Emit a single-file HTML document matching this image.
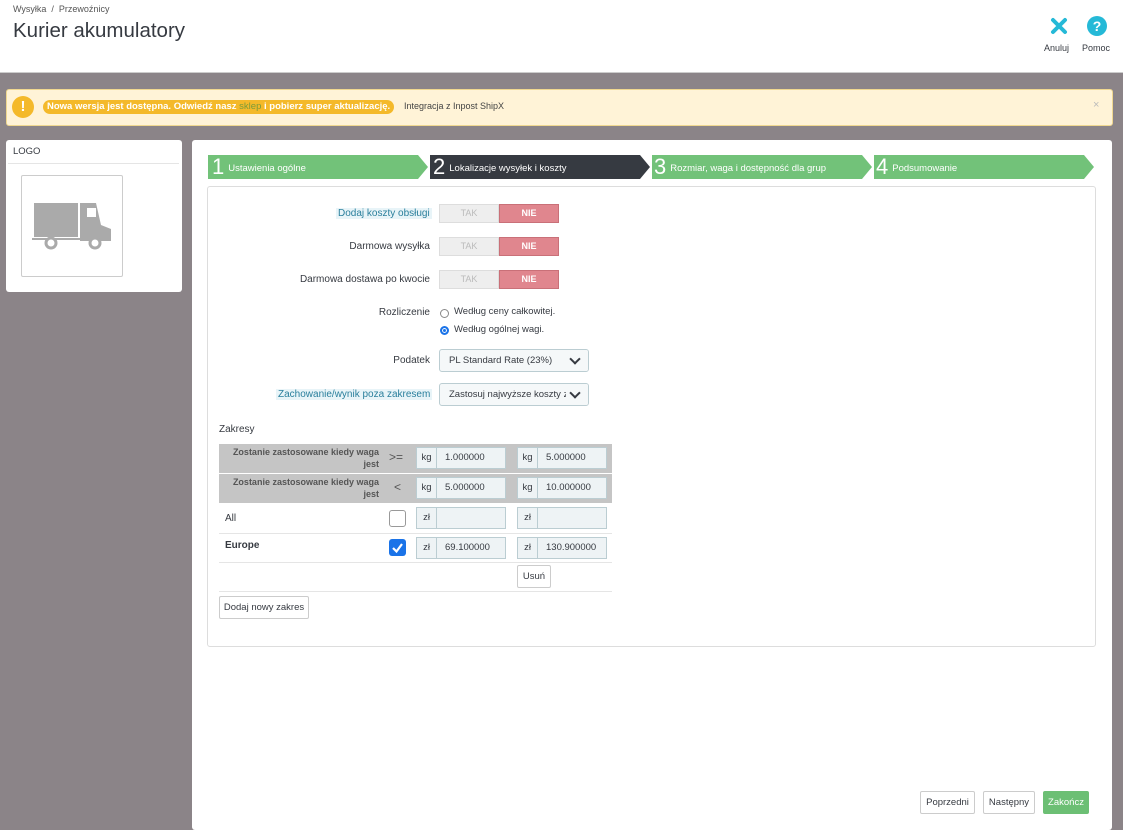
<!DOCTYPE html>
<html><head><meta charset="utf-8"><style>
*{box-sizing:border-box;margin:0;padding:0}
body{width:1123px;height:821px;position:relative;overflow:hidden;background:#8b8488;font-family:"Liberation Sans",sans-serif;font-size:10px;color:#363a41}
.a{position:absolute}
.hdr{left:0;top:0;width:1123px;height:73px;background:#fff;border-bottom:1px solid #ccc}
.lbl{position:absolute;text-align:right;font-size:10px;color:#363a41}
.tog{position:absolute;left:439px;width:120px;height:19px;display:flex;font-size:9px}
.tog span{flex:1;text-align:center;line-height:17px}
.tog .t{background:#eee;color:#bbb;border:1px solid #ddd}
.tog .n{background:#e0868e;color:#fff;font-weight:bold;border:1px solid #c97078}
.sel{position:absolute;left:439px;width:150px;height:23px;border:1px solid #bbcdd2;background:#f5f8f9;border-radius:3px;padding-left:9px;line-height:21px;font-size:9.5px;overflow:hidden;white-space:nowrap}
.sel:after{content:"";position:absolute;right:0;top:0;width:22px;height:21px;background:#f5f8f9}
.sel:before{content:"";position:absolute;right:9px;top:5px;width:6px;height:6px;border-right:2px solid #363a41;border-bottom:2px solid #363a41;transform:rotate(45deg);z-index:2}
.inp{position:absolute;height:22px;border:1px solid #bbcdd2;background:#eef3f5;display:flex;font-size:9.5px}
.inp b{font-weight:normal;width:20px;border-right:1px solid #bbcdd2;text-align:center;line-height:20px}
.inp i{font-style:normal;padding-left:8px;line-height:20px}
.btn{position:absolute;border:1px solid #ccc;background:#fff;border-radius:2px;font-size:9.5px;text-align:center;color:#363a41}
.step{position:absolute;top:155px;height:24px;color:#fff;font-size:9.5px;line-height:24px}
.step em{font-style:normal;font-size:22px;font-weight:normal;vertical-align:-3px;margin-right:4px}
</style></head><body>
<div class="a hdr"></div>
<div class="a" style="left:13px;top:4px;font-size:9px;color:#555">Wysyłka &nbsp;/&nbsp; Przewoźnicy</div>
<div class="a" style="left:13px;top:19px;font-size:20.5px;color:#363a41">Kurier akumulatory</div>
<div class="a" style="left:1050px;top:17px;width:18px;height:18px">
<svg width="18" height="18" viewBox="0 0 18 18"><path d="M3 3L15 15M15 3L3 15" stroke="#25b9d7" stroke-width="4" stroke-linecap="round"/></svg></div>
<div class="a" style="left:1087px;top:16px;width:20px;height:20px;border-radius:50%;background:#25b9d7;color:#fff;font-weight:bold;font-size:14px;text-align:center;line-height:20px">?</div>
<div class="a" style="left:1044px;top:43px;font-size:9px">Anuluj</div>
<div class="a" style="left:1082px;top:43px;font-size:9px">Pomoc</div>

<div class="a" style="left:6px;top:89px;width:1107px;height:37px;background:#fff3d7;border:1px solid #f0d890;border-radius:3px"></div>
<div class="a" style="left:12px;top:96px;width:22px;height:22px;border-radius:50%;background:#f4b92a;color:#fff;font-weight:bold;text-align:center;line-height:22px;font-size:15px">!</div>
<div class="a" style="left:43px;top:100px;height:14px;background:#f4b92a;color:#fff;border-radius:7px;padding:0 4px;font-size:9.5px;font-weight:bold;line-height:14px">Nowa wersja jest dostępna. Odwiedź nasz <span style="color:#7c9c3a;font-weight:normal">sklep</span> i pobierz super aktualizację.</div>
<div class="a" style="left:404px;top:101px;font-size:9px;color:#444">Integracja z Inpost ShipX</div>
<div class="a" style="left:1093px;top:99px;color:#bbb;font-size:11px">×</div>

<div class="a" style="left:6px;top:140px;width:176px;height:152px;background:#fff;border-radius:3px"></div>
<div class="a" style="left:13px;top:146px;font-size:9.5px">LOGO</div>
<div class="a" style="left:8px;top:163px;width:171px;height:1px;background:#e5e5e5"></div>
<div class="a" style="left:21px;top:175px;width:102px;height:102px;border:1px solid #ccc;border-radius:2px"></div>
<svg class="a" style="left:32px;top:203px" width="80" height="48" viewBox="0 0 80 48">
<rect x="2" y="0" width="44" height="34" fill="#aaa"/><path d="M48 0H64L69 22L79 26V38H48Z" fill="#aaa"/><rect x="55" y="5" width="9" height="9" fill="#fff"/><rect x="0" y="35" width="79" height="2" fill="#aaa"/>
<circle cx="19" cy="40" r="5" fill="#fff" stroke="#aaa" stroke-width="3"/><circle cx="63" cy="40" r="5" fill="#fff" stroke="#aaa" stroke-width="3"/></svg>

<div class="a" style="left:192px;top:140px;width:920px;height:690px;background:#fff;border-radius:3px"></div>
<div class="step" style="left:208px;width:210px;background:#72c279;padding-left:4px"><em>1</em>Ustawienia ogólne</div>
<div class="a" style="left:418px;top:155px;border-left:10px solid #72c279;border-top:12px solid transparent;border-bottom:12px solid transparent"></div>
<div class="step" style="left:430px;width:210px;background:#363a41;padding-left:3px"><em>2</em>Lokalizacje wysyłek i koszty</div>
<div class="a" style="left:640px;top:155px;border-left:10px solid #363a41;border-top:12px solid transparent;border-bottom:12px solid transparent"></div>
<div class="step" style="left:652px;width:210px;background:#72c279;padding-left:2px"><em>3</em>Rozmiar, waga i dostępność dla grup</div>
<div class="a" style="left:862px;top:155px;border-left:10px solid #72c279;border-top:12px solid transparent;border-bottom:12px solid transparent"></div>
<div class="step" style="left:874px;width:210px;background:#72c279;padding-left:2px"><em>4</em>Podsumowanie</div>
<div class="a" style="left:1084px;top:155px;border-left:10px solid #72c279;border-top:12px solid transparent;border-bottom:12px solid transparent"></div>

<div class="a" style="left:207px;top:186px;width:889px;height:461px;border:1px solid #ddd;border-radius:3px"></div>

<div class="lbl" style="left:336px;top:208px;background:#e8f4f8;color:#2a7f9c;padding:0 2px">Dodaj koszty obsługi</div>
<div class="tog" style="top:204px"><span class="t">TAK</span><span class="n">NIE</span></div>
<div class="lbl" style="left:240px;width:190px;top:241px">Darmowa wysyłka</div>
<div class="tog" style="top:237px"><span class="t">TAK</span><span class="n">NIE</span></div>
<div class="lbl" style="left:240px;width:190px;top:274px">Darmowa dostawa po kwocie</div>
<div class="tog" style="top:270px"><span class="t">TAK</span><span class="n">NIE</span></div>
<div class="lbl" style="left:240px;width:190px;top:307px">Rozliczenie</div>
<div class="a" style="left:440px;top:309px;width:9px;height:9px;border:1px solid #888;border-radius:50%"></div>
<div class="a" style="left:454px;top:306px;font-size:9.5px">Według ceny całkowitej.</div>
<div class="a" style="left:440px;top:326px;width:9px;height:9px;border:2px solid #1a73e8;border-radius:50%;background:#1a73e8;box-shadow:inset 0 0 0 1px #fff"></div>
<div class="a" style="left:454px;top:324px;font-size:9.5px">Według ogólnej wagi.</div>
<div class="lbl" style="left:240px;width:190px;top:355px">Podatek</div>
<div class="sel" style="top:349px">PL Standard Rate (23%)</div>
<div class="lbl" style="left:276px;top:389px;background:#e8f4f8;color:#2a7f9c;padding:0 2px">Zachowanie/wynik poza zakresem</div>
<div class="sel" style="top:383px">Zastosuj najwyższe koszty zd</div>

<div class="a" style="left:219px;top:424px;font-size:10px">Zakresy</div>
<div class="a" style="left:219px;top:444px;width:393px;height:29px;background:#c5c5c5"></div>
<div class="a" style="left:219px;top:474px;width:393px;height:29px;background:#c5c5c5"></div>
<div class="a" style="left:222px;top:446px;width:157px;text-align:right;font-weight:bold;font-size:9px;color:#555;line-height:12px">Zostanie zastosowane kiedy waga jest</div>
<div class="a" style="left:222px;top:476px;width:157px;text-align:right;font-weight:bold;font-size:9px;color:#555;line-height:12px">Zostanie zastosowane kiedy waga jest</div>
<div class="a" style="left:389px;top:450px;font-size:12px;color:#555">&gt;=</div>
<div class="a" style="left:394px;top:480px;font-size:12px;color:#555">&lt;</div>
<div class="inp" style="left:416px;top:447px;width:90px"><b>kg</b><i>1.000000</i></div>
<div class="inp" style="left:517px;top:447px;width:90px"><b>kg</b><i>5.000000</i></div>
<div class="inp" style="left:416px;top:477px;width:90px"><b>kg</b><i>5.000000</i></div>
<div class="inp" style="left:517px;top:477px;width:90px"><b>kg</b><i>10.000000</i></div>
<div class="a" style="left:225px;top:513px">All</div>
<div class="a" style="left:389px;top:510px;width:17px;height:17px;border:1px solid #999;border-radius:3px"></div>
<div class="inp" style="left:416px;top:507px;width:90px"><b>zł</b><i></i></div>
<div class="inp" style="left:517px;top:507px;width:90px"><b>zł</b><i></i></div>
<div class="a" style="left:219px;top:533px;width:393px;height:1px;background:#e5e5e5"></div>
<div class="a" style="left:225px;top:540px;font-weight:bold">Europe</div>
<div class="a" style="left:389px;top:539px;width:17px;height:17px;background:#1a73e8;border-radius:3px"><svg width="17" height="17"><path d="M4 9L7.5 12.5L13 5" stroke="#fff" stroke-width="2.2" fill="none"/></svg></div>
<div class="inp" style="left:416px;top:537px;width:90px"><b>zł</b><i>69.100000</i></div>
<div class="inp" style="left:517px;top:537px;width:90px"><b>zł</b><i>130.900000</i></div>
<div class="a" style="left:219px;top:562px;width:393px;height:1px;background:#e5e5e5"></div>
<div class="btn" style="left:517px;top:565px;width:34px;height:23px;line-height:21px">Usuń</div>
<div class="a" style="left:219px;top:591px;width:393px;height:1px;background:#e5e5e5"></div>
<div class="btn" style="left:219px;top:596px;width:90px;height:23px;line-height:21px">Dodaj nowy zakres</div>

<div class="btn" style="left:920px;top:791px;width:55px;height:23px;line-height:21px">Poprzedni</div>
<div class="btn" style="left:983px;top:791px;width:52px;height:23px;line-height:21px">Następny</div>
<div class="btn" style="left:1043px;top:791px;width:46px;height:23px;line-height:21px;background:#6cbf74;border-color:#6cbf74;color:#fff">Zakończ</div>
</body></html>
